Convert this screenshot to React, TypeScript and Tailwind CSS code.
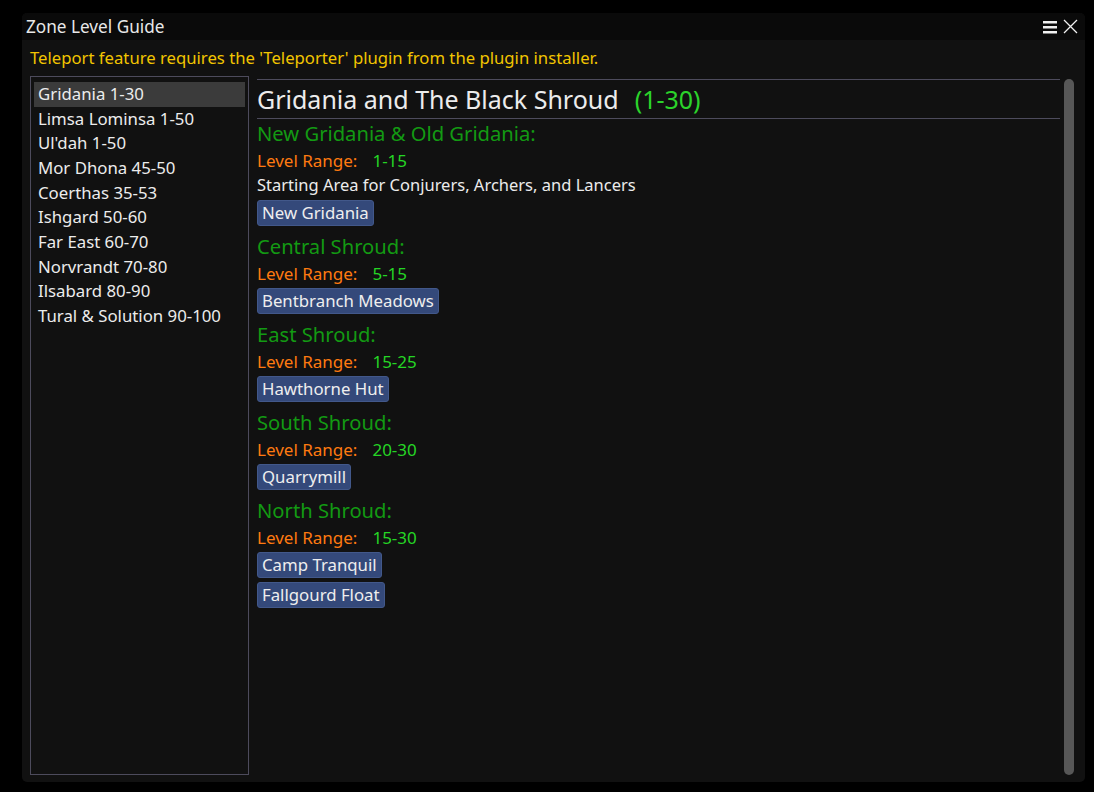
import React from "react";

const zones = [
  "Gridania 1-30",
  "Limsa Lominsa 1-50",
  "Ul'dah 1-50",
  "Mor Dhona 45-50",
  "Coerthas 35-53",
  "Ishgard 50-60",
  "Far East 60-70",
  "Norvrandt 70-80",
  "Ilsabard 80-90",
  "Tural & Solution 90-100",
];

type Section = { name: string; range: string; desc?: string; buttons: string[] };

const sections: Section[] = [
  { name: "New Gridania & Old Gridania:", range: "1-15", desc: "Starting Area for Conjurers, Archers, and Lancers", buttons: ["New Gridania"] },
  { name: "Central Shroud:", range: "5-15", buttons: ["Bentbranch Meadows"] },
  { name: "East Shroud:", range: "15-25", buttons: ["Hawthorne Hut"] },
  { name: "South Shroud:", range: "20-30", buttons: ["Quarrymill"] },
  { name: "North Shroud:", range: "15-30", buttons: ["Camp Tranquil", "Fallgourd Float"] },
];

function Btn({ label }: { label: string }) {
  return (
    <div className="flex">
      <div className="h-[26px] px-[4px] flex items-center rounded-[3px] bg-[#34497a] border border-[#42588a] text-[16.8px] text-[#eeeeee] leading-none">
        {label}
      </div>
    </div>
  );
}

export default function App() {
  return (
    <div
      className="w-[1094px] h-[792px] bg-black relative overflow-hidden"
      style={{ fontFamily: '"Noto Sans", "Open Sans", sans-serif' }}
    >
      <div className="absolute left-[22px] top-[13px] w-[1063px] h-[769px] rounded-[5px] bg-[#111111] flex flex-col overflow-hidden">
        {/* title bar */}
        <div className="h-[27px] bg-[#0a0a0a] flex items-center pl-[4px] pr-[7px] shrink-0">
          <div className="text-[17.2px] text-[#e8e8e8] leading-none flex-1">Zone Level Guide</div>
          <svg width="15" height="14" viewBox="0 0 15 14" className="mr-[5px]">
            <rect x="0" y="1" width="14" height="2.5" fill="#f0f0f0" />
            <rect x="0" y="6" width="14" height="2.5" fill="#f0f0f0" />
            <rect x="0" y="11" width="14" height="2.5" fill="#f0f0f0" />
          </svg>
          <svg width="15" height="15" viewBox="0 0 15 15">
            <path d="M1 1 L14 14 M14 1 L1 14" stroke="#f0f0f0" strokeWidth="1.3" />
          </svg>
        </div>
        {/* body */}
        <div className="flex-1 flex flex-col pl-[8px] pr-[11px] pt-[6px] pb-[7px] min-h-0">
          <div className="h-[24px] flex items-center text-[16.7px] text-[#f2c500] leading-none">
            Teleport feature requires the 'Teleporter' plugin from the plugin installer.
          </div>
          <div className="flex-1 flex gap-[8px] mt-[6px] min-h-0">
            {/* list */}
            <div className="w-[219px] border border-[#4d4b5c] pt-[5px] px-[3px] flex flex-col">
              {zones.map((z, i) => (
                <div
                  key={z}
                  className={`h-[24.7px] flex items-center px-[4px] text-[16.8px] text-[#ececec] leading-none ${
                    i === 0 ? "bg-[#3b3b3b]" : ""
                  }`}
                >
                  {z}
                </div>
              ))}
            </div>
            {/* content */}
            <div className="flex-1 flex gap-[4px] pt-[3px] min-w-0">
              <div className="flex-1 flex flex-col min-w-0">
                <div className="border-t border-b border-[#4d4b5c] h-[40px] flex items-center text-[25px] leading-none text-[#ececec]">
                  <span>Gridania and The Black Shroud</span>
                  <span className="ml-[16px] text-[#2bd32b]">(1-30)</span>
                </div>
                <div className="flex flex-col gap-[4px] -mt-[2px]">
                  {sections.map((s) => (
                    <React.Fragment key={s.name}>
                      <div className="h-[28px] pt-[5px] flex items-center text-[20.2px] leading-none text-[#139a13]">{s.name}</div>
                      <div className="h-[22px] flex items-center text-[17px] leading-none">
                        <span className="text-[#ff7a10]">Level Range:</span>
                        <span className="ml-[15px] text-[#25d525]">{s.range}</span>
                      </div>
                      {s.desc && (
                        <div className="h-[21px] flex items-center text-[16.5px] leading-none text-[#ececec]">{s.desc}</div>
                      )}
                      {s.buttons.map((b) => (
                        <Btn key={b} label={b} />
                      ))}
                    </React.Fragment>
                  ))}
                </div>
              </div>
              <div className="w-[10px] flex flex-col">
                <div className="flex-1 rounded-full bg-[#575757]" />
              </div>
            </div>
          </div>
        </div>
      </div>
    </div>
  );
}
